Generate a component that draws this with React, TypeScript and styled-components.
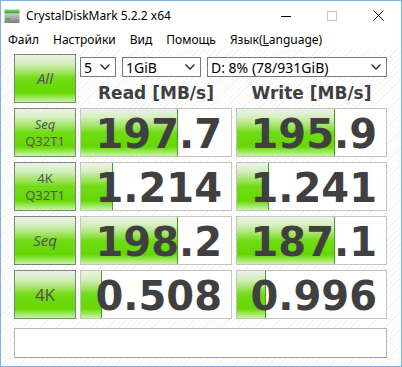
import React from "react";
import styled, { createGlobalStyle } from "styled-components";

const GlobalStyle = createGlobalStyle`
  html, body {
    margin: 0;
    padding: 0;
    width: 402px;
    height: 367px;
    overflow: hidden;
    background: #fff;
  }
`;

const uiFont = `"Noto Sans", "Open Sans", sans-serif`;
const numFont = `"DejaVu Sans", Verdana, sans-serif`;

const greenGradient = `linear-gradient(
  to bottom,
  #eef2ea 0%,
  #d4eebe 18%,
  #a2e464 36%,
  #70dc16 50%,
  #66d800 80%,
  #96e856 90%,
  #c8f4a4 100%
)`;

const Window = styled.div`
  width: 402px;
  height: 367px;
  box-sizing: border-box;
  border: 1px solid #7eb2e6;
  display: flex;
  flex-direction: column;
  background: #fff;
  font-family: ${uiFont};
`;

const TitleBar = styled.div`
  height: 29px;
  display: flex;
  align-items: center;
  flex-shrink: 0;
`;

const AppIcon = styled.svg`
  width: 16px;
  height: 16px;
  margin: 0 6px 0 3px;
  flex-shrink: 0;
`;

const Title = styled.span`
  font-size: 12px;
  color: #000;
  flex: 1;
  white-space: nowrap;
`;

const CaptionButton = styled.div`
  width: 46px;
  height: 29px;
  display: flex;
  align-items: center;
  justify-content: center;
`;

const MenuBar = styled.div`
  height: 19px;
  display: flex;
  align-items: center;
  flex-shrink: 0;
`;

const MenuItem = styled.span`
  padding: 0 7px;
  font-size: 12px;
  color: #000;
  line-height: 19px;
`;

const Client = styled.div`
  flex: 1;
  padding: 5px 0 0 13px;
  background-color: #fff;
  background-image: repeating-linear-gradient(
    135deg,
    #f4f4f4 0px,
    #f4f4f4 1px,
    #ffffff 1px,
    #ffffff 4px
  );
`;

const Board = styled.div`
  display: grid;
  grid-template-columns: 62px 152px 151px;
  grid-auto-rows: 49px;
  column-gap: 4px;
  row-gap: 5px;
`;

const TestButton = styled.div<{ $size: number; $italic?: boolean }>`
  box-sizing: border-box;
  border: 1px solid #778877;
  background: ${greenGradient};
  display: flex;
  flex-direction: column;
  align-items: center;
  justify-content: center;
  color: #555;
  font-size: ${(p) => p.$size}px;
  font-style: ${(p) => (p.$italic ? "italic" : "normal")};
  line-height: ${(p) => p.$size + 4}px;
  text-align: center;
`;

const TopPanel = styled.div`
  grid-column: 2 / 4;
  display: grid;
  grid-template-columns: 152px 151px;
  grid-template-rows: 20px 1fr;
  column-gap: 4px;
  padding-top: 3px;
`;

const Selectors = styled.div`
  grid-column: 1 / 3;
  display: flex;
  gap: 6px;
`;

const Select = styled.div<{ $width: number }>`
  box-sizing: border-box;
  width: ${(p) => p.$width}px;
  height: 20px;
  border: 1px solid #7a7a7a;
  background: #fff;
  display: flex;
  align-items: center;
  padding: 0 5px 0 3px;
  font-size: 14px;
  color: #000;
`;

const SelectText = styled.span`
  flex: 1;
  white-space: nowrap;
`;

const Header = styled.div`
  font-family: ${numFont};
  font-weight: bold;
  font-size: 17px;
  color: #404040;
  text-align: center;
  line-height: 20px;
  padding-top: 6px;
  white-space: nowrap;
`;

const Cell = styled.div`
  position: relative;
  box-sizing: border-box;
  border: 1px solid #c3c3c3;
  background: #fff;
  overflow: hidden;
`;

const Bar = styled.div`
  position: absolute;
  left: 0;
  top: 0;
  bottom: 0;
  box-sizing: border-box;
  border-right: 1px solid #44a022;
  background: ${greenGradient};
`;

const Value = styled.div`
  position: relative;
  box-sizing: border-box;
  height: 47px;
  padding: 3px 9px 0 0;
  font-family: ${numFont};
  font-weight: bold;
  font-size: 40px;
  line-height: 44px;
  color: #404040;
  text-align: right;
  white-space: nowrap;
`;

const Comment = styled.div`
  box-sizing: border-box;
  width: 373px;
  height: 30px;
  margin-top: 9px;
  border: 1px solid #b4b4b4;
  border-bottom-color: #9c9c9c;
  background: #fff;
`;

const Italic = styled.span`
  font-style: italic;
`;

const Chevron = () => (
  <svg width="10" height="6" viewBox="0 0 10 6">
    <polyline points="0.5,0.5 5,5 9.5,0.5" fill="none" stroke="#222" strokeWidth="1.3" />
  </svg>
);

type Row = {
  label: React.ReactNode;
  size: number;
  italic?: boolean;
  read: string;
  write: string;
  readBar: number;
  writeBar: number;
};

const rows: Row[] = [
  {
    label: (
      <>
        <Italic>Seq</Italic>
        <span>Q32T1</span>
      </>
    ),
    size: 13,
    read: "197.7",
    write: "195.9",
    readBar: 97,
    writeBar: 98,
  },
  {
    label: (
      <>
        <span>4K</span>
        <span>Q32T1</span>
      </>
    ),
    size: 13,
    read: "1.214",
    write: "1.241",
    readBar: 32,
    writeBar: 32,
  },
  { label: "Seq", size: 15, italic: true, read: "198.2", write: "187.1", readBar: 97, writeBar: 98 },
  { label: "4K", size: 17, read: "0.508", write: "0.996", readBar: 21, writeBar: 29 },
];

export default function App() {
  return (
    <>
      <GlobalStyle />
      <Window>
        <TitleBar>
          <AppIcon viewBox="0 0 16 16">
            <defs>
              <linearGradient id="ig" x1="0" y1="0" x2="0" y2="1">
                <stop offset="0" stopColor="#7ee06a" />
                <stop offset="1" stopColor="#2f9a36" />
              </linearGradient>
              <linearGradient id="ib" x1="0" y1="0" x2="0" y2="1">
                <stop offset="0" stopColor="#c8c8c8" />
                <stop offset="1" stopColor="#7c7c7c" />
              </linearGradient>
            </defs>
            <rect x="0.5" y="1.5" width="15" height="4" fill="url(#ig)" />
            <rect x="0.5" y="6" width="15" height="9" fill="url(#ib)" />
            <rect x="2" y="10" width="4" height="2" fill="#3fbf3f" />
          </AppIcon>
          <Title>CrystalDiskMark 5.2.2 x64</Title>
          <CaptionButton>
            <svg width="10" height="10" viewBox="0 0 10 10">
              <line x1="0" y1="5.5" x2="10" y2="5.5" stroke="#000" strokeWidth="1" />
            </svg>
          </CaptionButton>
          <CaptionButton>
            <svg width="10" height="10" viewBox="0 0 10 10">
              <rect x="0.5" y="0.5" width="9" height="9" fill="none" stroke="#c8c8c8" strokeWidth="1" />
            </svg>
          </CaptionButton>
          <CaptionButton>
            <svg width="11" height="11" viewBox="0 0 11 11">
              <line x1="0.5" y1="0.5" x2="10.5" y2="10.5" stroke="#000" strokeWidth="1" />
              <line x1="10.5" y1="0.5" x2="0.5" y2="10.5" stroke="#000" strokeWidth="1" />
            </svg>
          </CaptionButton>
        </TitleBar>
        <MenuBar>
          <MenuItem>Файл</MenuItem>
          <MenuItem>Настройки</MenuItem>
          <MenuItem>Вид</MenuItem>
          <MenuItem>Помощь</MenuItem>
          <MenuItem>
            Язык(<u>L</u>anguage)
          </MenuItem>
        </MenuBar>
        <Client>
          <Board>
            <TestButton $size={15} $italic>
              All
            </TestButton>
            <TopPanel>
              <Selectors>
                <Select $width={36}>
                  <SelectText>5</SelectText>
                  <Chevron />
                </Select>
                <Select $width={79}>
                  <SelectText>1GiB</SelectText>
                  <Chevron />
                </Select>
                <Select $width={180}>
                  <SelectText>D: 8% (78/931GiB)</SelectText>
                  <Chevron />
                </Select>
              </Selectors>
              <Header>Read [MB/s]</Header>
              <Header>Write [MB/s]</Header>
            </TopPanel>
            {rows.map((r, i) => (
              <React.Fragment key={i}>
                <TestButton $size={r.size} $italic={r.italic}>
                  {r.label}
                </TestButton>
                <Cell>
                  <Bar style={{ width: r.readBar }} />
                  <Value>{r.read}</Value>
                </Cell>
                <Cell>
                  <Bar style={{ width: r.writeBar }} />
                  <Value>{r.write}</Value>
                </Cell>
              </React.Fragment>
            ))}
          </Board>
          <Comment />
        </Client>
      </Window>
    </>
  );
}
